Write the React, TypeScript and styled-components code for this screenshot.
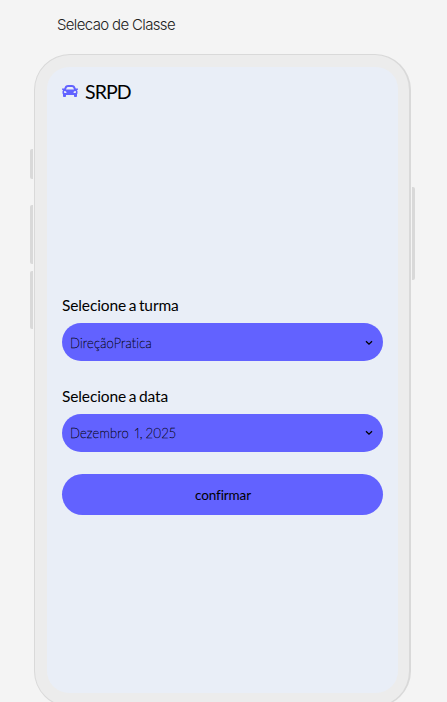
import React from "react";
import styled, { createGlobalStyle } from "styled-components";
import { FaCar } from "react-icons/fa";

const GlobalStyle = createGlobalStyle`
  * { box-sizing: border-box; }
  body { margin: 0; background: #f4f4f4; font-family: Lato, sans-serif; }
`;

const Page = styled.main`
  height: 702px;
  overflow: hidden;
  padding-left: 34px;
`;

const FrameTitle = styled.div`
  height: 54px;
  padding: 15px 0 0 23px;
  font: 300 15px/20px Inter, sans-serif;
  letter-spacing: -0.65px;
  color: #222;
`;

const Phone = styled.div`
  position: relative;
  width: 377px;
  height: 653px;
  padding: 12px 11px 12px 12px;
  border: 1px solid #d9d9d9;
  border-right-width: 2px;
  border-radius: 36px;
  background: #ececec;
`;

const SideKey = styled.span<{ $side: "left" | "right"; $top: number; $length: number }>`
  position: absolute;
  ${({ $side }) => ($side === "left" ? "left: -5px;" : "right: -6px;")}
  top: ${({ $top }) => $top}px;
  width: 3px;
  height: ${({ $length }) => $length}px;
  border-radius: ${({ $side }) => ($side === "left" ? "2px 0 0 2px" : "0 2px 2px 0")};
  background: #d9d9d9;
`;

const Screen = styled.div`
  display: flex;
  flex-direction: column;
  height: 626px;
  padding: 12px 15px 0;
  border-radius: 22px;
  background: #e9eef7;
`;

const Brand = styled.header`
  display: flex;
  align-items: center;
  gap: 7px;
  height: 24px;
  font-size: 19.5px;
  line-height: 24px;
  letter-spacing: -0.9px;
  color: #000;

  svg { color: #6262ff; }
`;

const BrandName = styled.span`
  padding-top: 2px;
`;

const Form = styled.div`
  display: flex;
  flex-direction: column;
  margin-top: 192px;
`;

const Field = styled.div`
  height: 91px;
`;

const Label = styled.div`
  height: 28px;
  font-size: 15.5px;
  line-height: 20px;
  letter-spacing: -0.12px;
  word-spacing: -1.2px;
  color: #000;
`;

const Select = styled.div<{ $drop: number }>`
  display: flex;
  align-items: center;
  justify-content: space-between;
  height: 38px;
  padding: ${({ $drop }) => $drop}px 10px 0 8px;
  border-radius: 19px;
  background: #6262ff;
  font-size: 13px;
  font-weight: 100;
  letter-spacing: 0.2px;
  word-spacing: -0.9px;
  font-variant-numeric: proportional-nums;
  -webkit-text-stroke: 0.35px #000;
  color: #000;
  white-space: pre;
`;

const Confirm = styled.button`
  height: 41px;
  margin-top: -3px;
  padding: 0 0 0 1px;
  border: 0;
  border-radius: 21px;
  background: #6262ff;
  font: 400 13.5px Lato, sans-serif;
  letter-spacing: -0.12px;
  color: #000;
`;

const Chevron = () => (
  <svg width="8" height="6" viewBox="0 0 8 6" fill="none" stroke="#000" strokeWidth="1.3">
    <path d="M1 1.2 4 4.2 7 1.2" />
  </svg>
);

const keys = [
  { side: "left", top: 94, length: 30 },
  { side: "left", top: 150, length: 59 },
  { side: "left", top: 216, length: 58 },
  { side: "right", top: 132, length: 93 },
] as const;

const fields = [
  { label: "Selecione a turma", value: "DireçãoPratica", drop: 1 },
  { label: "Selecione a data", value: "Dezembro  1, 2025", drop: 0 },
];

export default function App() {
  return (
    <Page>
      <GlobalStyle />
      <FrameTitle>Selecao de Classe</FrameTitle>
      <Phone>
        {keys.map((k) => (
          <SideKey key={k.side + k.top} $side={k.side} $top={k.top} $length={k.length} />
        ))}
        <Screen>
          <Brand>
            <FaCar size={16} />
            <BrandName>SRPD</BrandName>
          </Brand>
          <Form>
            {fields.map((f) => (
              <Field key={f.label}>
                <Label>{f.label}</Label>
                <Select $drop={f.drop}>
                  <span>{f.value}</span>
                  <Chevron />
                </Select>
              </Field>
            ))}
            <Confirm>confirmar</Confirm>
          </Form>
        </Screen>
      </Phone>
    </Page>
  );
}
